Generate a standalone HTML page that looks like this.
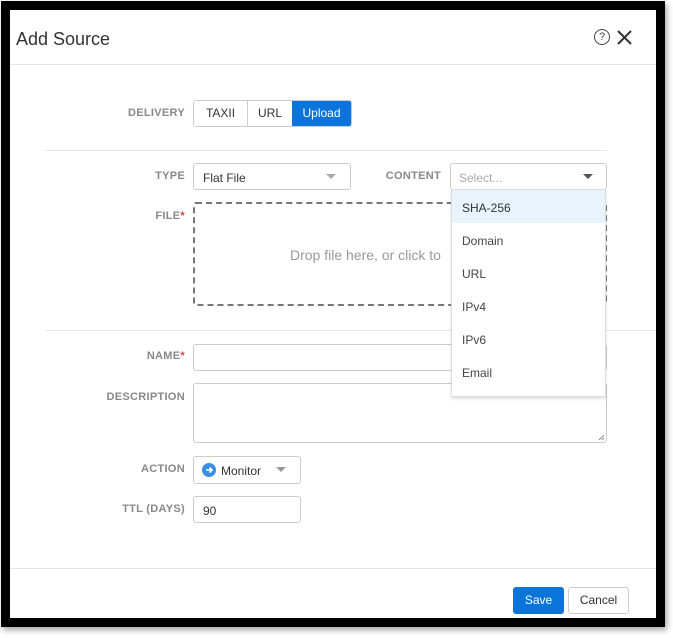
<!DOCTYPE html>
<html><head><style>
*{box-sizing:border-box;margin:0;padding:0}
body{width:673px;height:638px;background:#fff;position:relative;font-family:"Liberation Sans",sans-serif;overflow:hidden}
.frame{position:absolute;left:1px;top:1px;width:664px;height:626px;border:9px solid #000;border-right-width:9px;background:#fff;box-shadow:2px 3px 6px rgba(0,0,0,.35)}
.a{position:absolute}
.lbl{position:absolute;font-size:11px;font-weight:bold;color:#888;text-align:right;width:120px;letter-spacing:.3px}
.box{position:absolute;border:1px solid #ccc;border-radius:3px;background:#fff}
.txt{font-size:12px;color:#333}
.hr{position:absolute;height:1px;background:#e6e6e6}
.tri{position:absolute;width:0;height:0;border-left:5px solid transparent;border-right:5px solid transparent;border-top:5px solid #999}
.req{color:#e04040}
.item{position:absolute;left:0;width:100%;height:33px;font-size:12px;color:#444;padding:11px 0 0 10px}
</style></head><body>
<div class="frame"></div>
<div class="a" style="left:16px;top:29px;font-size:18px;color:#333">Add Source</div>
<div class="a" style="left:594px;top:29px;width:16px;height:16px;border:1.3px solid #444;border-radius:50%;font-size:11px;text-align:center;line-height:14px;color:#444">?</div>
<svg class="a" style="left:616px;top:29px" width="17" height="17"><path d="M2 2L15 15M15 2L2 15" stroke="#333" stroke-width="2"/></svg>
<div class="hr" style="left:10px;top:64px;width:646px"></div>

<div class="lbl" style="left:65px;top:107px">DELIVERY</div>
<div class="box" style="left:193px;top:100px;width:159px;height:27px;overflow:hidden;display:flex">
<div class="txt" style="width:54px;border-right:1px solid #ccc;text-align:center;line-height:25px">TAXII</div>
<div class="txt" style="width:44px;text-align:center;line-height:25px">URL</div>
<div style="flex:1;background:#0a74da;color:#fff;font-size:12px;text-align:center;line-height:25px">Upload</div>
</div>
<div class="hr" style="left:45px;top:150px;width:562px"></div>

<div class="lbl" style="left:65px;top:170px">TYPE</div>
<div class="box" style="left:193px;top:163px;width:158px;height:27px"><span class="a txt" style="left:9px;top:7px">Flat File</span><div class="tri" style="left:132px;top:10px;border-top-color:#aaa"></div></div>
<div class="lbl" style="left:321px;top:170px">CONTENT</div>
<div class="box" style="left:450px;top:163px;width:157px;height:27px"><span class="a" style="left:8px;top:7px;font-size:12px;color:#aaa">Select...</span><div class="tri" style="left:132px;top:10px;border-top-color:#555"></div></div>

<div class="lbl" style="left:65px;top:210px">FILE<span class="req">*</span></div>
<div class="a" style="left:193px;top:202px;width:414px;height:104px;border:2px dashed #777;border-radius:3px"></div>
<div class="a" style="left:290px;top:247px;font-size:14px;color:#999">Drop file here, or click to</div>

<div class="hr" style="left:45px;top:330px;width:611px"></div>
<div class="lbl" style="left:65px;top:350px">NAME<span class="req">*</span></div>
<div class="box" style="left:193px;top:344px;width:414px;height:27px"></div>
<div class="lbl" style="left:65px;top:391px">DESCRIPTION</div>
<div class="box" style="left:193px;top:383px;width:414px;height:60px"></div>
<svg class="a" style="left:598px;top:434px" width="7" height="7"><path d="M1 6L6 1M4 6L6 4" stroke="#888"/></svg>

<div class="lbl" style="left:65px;top:463px">ACTION</div>
<div class="box" style="left:193px;top:456px;width:108px;height:28px">
<div class="a" style="left:8px;top:6px;width:14px;height:14px;border-radius:50%;background:#3a8ee6"></div>
<svg class="a" style="left:8px;top:6px" width="14" height="14"><path d="M4 7H10M7.5 4.5L10 7L7.5 9.5" stroke="#fff" stroke-width="1.6" fill="none"/></svg>
<span class="a txt" style="left:27px;top:7px">Monitor</span><div class="tri" style="left:82px;top:10px"></div></div>
<div class="lbl" style="left:65px;top:503px">TTL (DAYS)</div>
<div class="box" style="left:193px;top:496px;width:108px;height:27px"><span class="a txt" style="left:9px;top:7px">90</span></div>

<div class="a" style="left:451px;top:189px;width:155px;height:208px;background:#fff;border:1px solid #ddd;box-shadow:0 2px 3px rgba(0,0,0,.12)">
<div class="item" style="top:0;background:#e8f3fd;color:#333">SHA-256</div>
<div class="item" style="top:33px">Domain</div>
<div class="item" style="top:66px">URL</div>
<div class="item" style="top:99px">IPv4</div>
<div class="item" style="top:132px">IPv6</div>
<div class="item" style="top:165px">Email</div>
</div>

<div class="hr" style="left:10px;top:568px;width:646px"></div>
<div class="a" style="left:513px;top:587px;width:51px;height:27px;background:#0a74da;border-radius:3px;color:#fff;font-size:12px;text-align:center;line-height:27px">Save</div>
<div class="a" style="left:568px;top:587px;width:61px;height:27px;border:1px solid #ccc;border-radius:3px;color:#333;font-size:12px;text-align:center;line-height:25px">Cancel</div>
</body></html>
